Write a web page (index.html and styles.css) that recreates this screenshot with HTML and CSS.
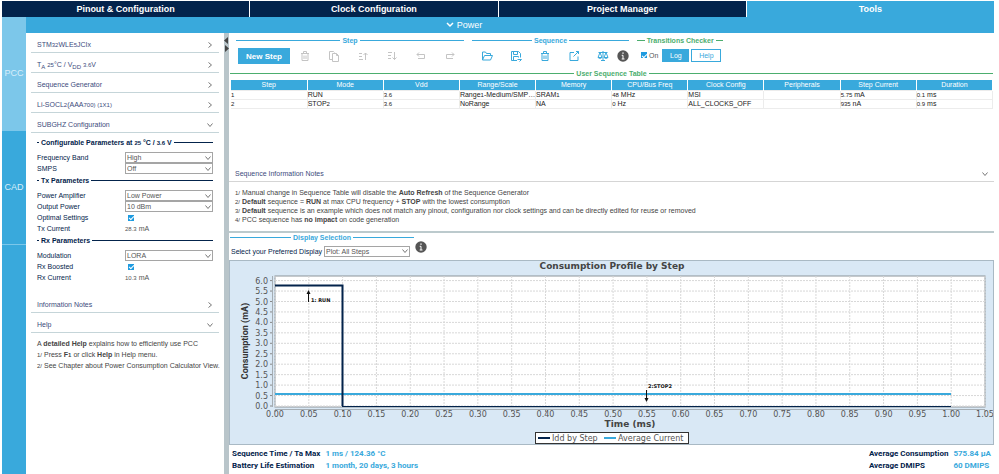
FILE: index.html
```html
<!DOCTYPE html>
<html lang="en">
<head>
  <meta charset="UTF-8">
  <title>Power Consumption Calculator</title>
  <link rel="stylesheet" href="styles.css">
</head>
<body>

  <nav class="tabs">
    <a href="#pinout">Pinout &amp; Configuration</a>
    <a href="#clock">Clock Configuration</a>
    <a href="#project">Project Manager</a>
    <a href="#tools" class="active">Tools</a>
  </nav>

  <div class="workspace">
    <nav class="rail">
      <a href="#pcc" class="active">PCC</a>
      <a href="#cad">CAD</a>
    </nav>

    <div class="content">
      <div class="power-bar">
        <button type="button"><svg width="8" height="6" viewBox="0 0 8 6"><path d="M1 1l3 3 3-3"/></svg>Power</button>
      </div>

      <div class="split">
        <aside class="side">
          <button type="button" class="fold"><span>STM<small>32</small>WLE<small>5</small>JCIx</span><svg viewBox="0 0 6 6"><path d="M1.5 0.5l3 2.5-3 2.5"/></svg></button>
          <button type="button" class="fold"><span>T<sub>A</sub> <small>25</small>°C / V<sub>DD</sub> <small>3.6</small>V</span><svg viewBox="0 0 6 6"><path d="M1.5 0.5l3 2.5-3 2.5"/></svg></button>
          <button type="button" class="fold"><span>Sequence Generator</span><svg viewBox="0 0 6 6"><path d="M1.5 0.5l3 2.5-3 2.5"/></svg></button>
          <button type="button" class="fold"><span>Li-SOCL<small>2</small>(AAA<small>700) (1X1)</small></span><svg viewBox="0 0 6 6"><path d="M1.5 0.5l3 2.5-3 2.5"/></svg></button>
          <button type="button" class="fold"><span>SUBGHZ Configuration</span><svg viewBox="0 0 6 6"><path d="M0.5 1.5l2.5 3 2.5-3"/></svg></button>

          <form class="params">
            <div class="rule navy left"><span>Configurable Parameters at <small>25</small> °C / <small>3.6</small> V</span></div>
            <div class="rows">
              <label for="band">Frequency Band</label>
              <div class="select"><select id="band"><option>High</option></select><svg viewBox="0 0 6 6"><path d="M0.5 1.5l2.5 3 2.5-3"/></svg></div>
              <label for="smps">SMPS</label>
              <div class="select"><select id="smps"><option>Off</option></select><svg viewBox="0 0 6 6"><path d="M0.5 1.5l2.5 3 2.5-3"/></svg></div>
            </div>
            <div class="rule navy left">Tx Parameters</div>
            <div class="rows">
              <label for="amp">Power Amplifier</label>
              <div class="select"><select id="amp"><option>Low Power</option></select><svg viewBox="0 0 6 6"><path d="M0.5 1.5l2.5 3 2.5-3"/></svg></div>
              <label for="output">Output Power</label>
              <div class="select"><select id="output"><option>10 dBm</option></select><svg viewBox="0 0 6 6"><path d="M0.5 1.5l2.5 3 2.5-3"/></svg></div>
              <label for="optimal">Optimal Settings</label>
              <input type="checkbox" id="optimal" checked>
              <span>Tx Current</span>
              <span class="value"><small>28.3</small> mA</span>
            </div>
            <div class="rule navy left">Rx Parameters</div>
            <div class="rows">
              <label for="modulation">Modulation</label>
              <div class="select"><select id="modulation"><option>LORA</option></select><svg viewBox="0 0 6 6"><path d="M0.5 1.5l2.5 3 2.5-3"/></svg></div>
              <label for="boosted">Rx Boosted</label>
              <input type="checkbox" id="boosted" checked>
              <span>Rx Current</span>
              <span class="value"><small>10.3</small> mA</span>
            </div>
          </form>

          <button type="button" class="fold"><span>Information Notes</span><svg viewBox="0 0 6 6"><path d="M1.5 0.5l3 2.5-3 2.5"/></svg></button>
          <button type="button" class="fold"><span>Help</span><svg viewBox="0 0 6 6"><path d="M0.5 1.5l2.5 3 2.5-3"/></svg></button>
          <div class="help">
            <p>A <b>detailed Help</b> explains how to efficiently use PCC</p>
            <p><small>1/</small> Press <b>F<small>1</small></b> or click <b>Help</b> in Help menu.</p>
            <p><small>2/</small> See Chapter about Power Consumption Calculator View.</p>
          </div>
        </aside>

        <div class="splitter">
          <svg width="5" height="20" viewBox="0 0 5 20"><path d="M4 2v7L0 5.500zM1 10v7l4-3.500z"/></svg>
        </div>

        <main class="main">
          <div class="toolbar">
            <section class="group">
              <h2 class="rule blue">Step</h2>
              <div class="tools">
                <button type="button" class="new-step">New Step</button>
                <button type="button" class="icon" aria-label="Delete step" disabled><svg viewBox="0 0 12 12"><path d="M2 3.500h8M4.500 3.500v-2h3v2M3 3.500v7h6v-7M5 5.500v3.500M7 5.500v3.500"/></svg></button>
                <button type="button" class="icon" aria-label="Duplicate step" disabled><svg viewBox="0 0 12 12"><path d="M4.500 9.500h-3v-8h4l1 1M4.500 3.500h4l2 2v6h-6zM8.500 3.500v2h2"/></svg></button>
                <button type="button" class="icon" aria-label="Move step up" disabled><svg viewBox="0 0 12 12"><path d="M2 3.500h3M2 6.500h3M2 9.500h4M8.500 10V3M6.500 5l2-2 2 2"/></svg></button>
                <button type="button" class="icon" aria-label="Move step down" disabled><svg viewBox="0 0 12 12"><path d="M2 2.500h4M2 5.500h3M2 8.500h3M8.500 2v7.500M6.500 7.500l2 2 2-2"/></svg></button>
                <button type="button" class="icon" aria-label="Undo" disabled><svg viewBox="0 0 12 12"><path d="M4 2.500l-2 2 2 2M2 4.500h7.500v4H3"/></svg></button>
                <button type="button" class="icon" aria-label="Redo" disabled><svg viewBox="0 0 12 12"><path d="M8 2.500l2 2-2 2M10 4.500H2.500v4H9"/></svg></button>
              </div>
            </section>

            <section class="group">
              <h2 class="rule blue">Sequence</h2>
              <div class="tools">
                <button type="button" class="icon" aria-label="Open"><svg viewBox="0 0 12 12"><path d="M1.500 10V2h3l1 1.500h4V5M1.500 10l2-4.500h8L9.500 10z"/></svg></button>
                <button type="button" class="icon" aria-label="Save"><svg viewBox="0 0 12 12"><path d="M1.500 1.500h7l2 2v4M1.500 1.500v9H7M3.500 1.500v3h4v-3M3.500 10.500v-4h5v1M7.500 9.500h4M9.500 11.500l2-2"/></svg></button>
                <button type="button" class="icon" aria-label="Delete sequence"><svg viewBox="0 0 12 12"><path d="M2 3.500h8M4.500 3.500v-2h3v2M3 3.500v7h6v-7M5 5.500v3.500M7 5.500v3.500"/></svg></button>
                <button type="button" class="icon" aria-label="Export"><svg viewBox="0 0 12 12"><path d="M6 2.500H2v8h8V6.500M5.500 6.500l5-5M8 1.500h2.500V4"/></svg></button>
                <button type="button" class="icon" aria-label="Compare"><svg viewBox="0 0 12 12"><path d="M1.500 2.500h9M6 1v9.500M4 10.500h4M3 2.500l-2 5h4zM9 2.500l-2 5h4zM1 7.500q2 2 4 0M7 7.500q2 2 4 0"/></svg></button>
                <svg class="info" viewBox="0 0 12 12"><circle cx="6" cy="6" r="5.700"/><path d="M6 2.300v1.700M4.700 5.300H6v3.700M4.700 9h2.800"/></svg>
              </div>
            </section>

            <section class="group checker">
              <h2 class="rule green">Transitions Checker</h2>
              <div class="tools">
                <input type="checkbox" id="checker" checked>
                <label for="checker">On</label>
                <button type="button" class="log">Log</button>
                <button type="button" class="outline">Help</button>
              </div>
            </section>
          </div>

          <h2 class="rule green table-title">User Sequence Table</h2>
          <table>
            <thead>
              <tr><th>Step</th><th>Mode</th><th>Vdd</th><th>Range/Scale</th><th>Memory</th><th>CPU/Bus Freq</th><th>Clock Config</th><th>Peripherals</th><th>Step Current</th><th>Duration</th></tr>
            </thead>
            <tbody>
              <tr><td><small>1</small></td><td>RUN</td><td><small>3.6</small></td><td>Range<small>1</small>-Medium/SMP…</td><td>SRAM<small>1</small></td><td><small>48</small> MHz</td><td>MSI</td><td></td><td><small>5.75</small> mA</td><td><small>0.1</small> ms</td></tr>
              <tr><td><small>2</small></td><td>STOP<small>2</small></td><td><small>3.6</small></td><td>NoRange</td><td>NA</td><td><small>0</small> Hz</td><td>ALL_CLOCKS_OFF</td><td></td><td><small>935</small> nA</td><td><small>0.9</small> ms</td></tr>
            </tbody>
          </table>

          <button type="button" class="fold notes-fold"><span>Sequence Information Notes</span><svg viewBox="0 0 6 6"><path d="M0.5 1.5l2.5 3 2.5-3"/></svg></button>
          <div class="notes">
            <p><small>1/</small> Manual change in Sequence Table will disable the <b>Auto Refresh</b> of the Sequence Generator</p>
            <p><small>2/</small> <b>Default</b> sequence = <b>RUN</b> at max CPU frequency + <b>STOP</b> with the lowest consumption</p>
            <p><small>3/</small> <b>Default</b> sequence is an example which does not match any pinout, configuration nor clock settings and can be directly edited for reuse or removed</p>
            <p><small>4/</small> PCC sequence has <b>no impact</b> on code generation</p>
          </div>

          <div class="display">
            <section>
              <h2 class="rule blue">Display Selection</h2>
              <div class="display-row">
                <label for="plot">Select your Preferred Display</label>
                <div class="select"><select id="plot"><option>Plot: All Steps</option></select><svg viewBox="0 0 6 6"><path d="M0.5 1.5l2.5 3 2.5-3"/></svg></div>
              </div>
            </section>
            <svg class="info" viewBox="0 0 12 12"><circle cx="6" cy="6" r="5.700"/><path d="M6 2.300v1.700M4.700 5.300H6v3.700M4.700 9h2.800"/></svg>
          </div>

          <div class="chart">
            <svg viewBox="0 0 763 183">
              <text class="chart-title" x="382" y="8">Consumption Profile by Step</text>
              <rect class="plot" x="45" y="15" width="710" height="131"/>
              <g id="grid"></g>
              <path class="axis" d="M42.500 15v131M45 148.500h710"/>
              <path class="average" d="M45 133h676"/>
              <path class="idd" d="M45 24.500h67.500V145"/>
              <path class="idd thin" d="M112 145.500h609"/>
              <path class="arrow" d="M78.500 41v-9M416.500 129v9"/>
              <path class="head" d="M76.500 33l2-4 2 4zM414.500 137l2 4 2-4z"/>
              <text class="note" x="81" y="41">1: RUN</text>
              <text class="note" x="418" y="127">2:STOP2</text>
              <text class="axis-title" x="400" y="166">Time (ms)</text>
              <text class="side-title" transform="translate(18 80) rotate(-90)">Consumption (mA)</text>
              <rect class="legend" x="305.500" y="171.500" width="153" height="11"/>
              <path class="idd" d="M308 177h12"/>
              <text x="322" y="180">Idd by Step</text>
              <path class="average" d="M374 177h12"/>
              <text x="388" y="180">Average Current</text>
            </svg>
          </div>

          <footer class="summary">
            <dl>
              <dt>Sequence Time / Ta Max</dt><dd>1 ms / 124.36 °C</dd>
              <dt>Battery Life Estimation</dt><dd>1 month, 20 days, 3 hours</dd>
            </dl>
            <dl>
              <dt>Average Consumption</dt><dd>575.84 µA</dd>
              <dt>Average DMIPS</dt><dd>60 DMIPS</dd>
            </dl>
          </footer>
        </main>
      </div>
    </div>
  </div>

  <script>
    const grid = document.getElementById("grid");
    let out = "";
    for (let i = 0; i <= 21; i++) {
      const x = 45 + i * 710 / 21;
      out += `<path class="line" d="M${x} 15v131"/><path class="tick" d="M${x} 149v2"/>`;
      out += `<text class="x" x="${x}" y="156">${(i * 0.05).toFixed(2)}</text>`;
    }
    for (let i = 0; i <= 12; i++) {
      const y = 145 - i * 10.45;
      out += `<path class="line" d="M45 ${y}h710"/><path class="tick" d="M40 ${y}h2"/>`;
      out += `<text class="y" x="38" y="${y + 3}">${(i * 0.5).toFixed(1)}</text>`;
    }
    grid.innerHTML = out;
  </script>

</body>
</html>
```
FILE: styles.css
```css
* {
  box-sizing: border-box;
}

body {
  margin: 0;
  padding: 1px 5px 0 2px;
  min-height: 100vh;
  display: flex;
  flex-direction: column;
  background-color: #fff;
  color: #03234b;
  font-family: "Liberation Sans", Arial, sans-serif;
  font-size: 7px;
  line-height: 9px;
}

button, select, input {
  margin: 0;
  font-family: inherit;
  font-size: 7px;
  line-height: 9px;
}

button {
  border: none;
  padding: 0;
  background: none;
  color: inherit;
  cursor: pointer;
}

a {
  color: white;
  text-decoration: none;
}

p, h2, dl, dd {
  margin: 0;
}

svg {
  fill: none;
  stroke: currentColor;
  flex: none;
}

small {
  font-size: 6px;
}

sub {
  font-size: 6px;
  line-height: 0;
}

.tabs {
  display: grid;
  grid-template-columns: repeat(4, 1fr);
  gap: 1px;
}

.tabs a {
  height: 16px;
  background-color: #03234b;
  font-size: 9px;
  line-height: 17px;
  font-weight: bold;
  text-align: center;
}

.tabs .active {
  background-color: #39a9dc;
}

.workspace {
  flex: 1;
  display: flex;
}

.rail {
  width: 24px;
  display: flex;
  flex-direction: column;
  background-color: #39a9dc;
}

.rail a {
  height: 114px;
  display: flex;
  align-items: center;
  justify-content: center;
  border-bottom: 1px solid #7cc7ea;
  font-size: 9px;
  color: #d8eefa;
}

.rail .active {
  background-color: #7cc7ea;
}

.content {
  flex: 1;
  min-width: 0;
  display: flex;
  flex-direction: column;
}

.power-bar {
  height: 16px;
  padding-right: 92px;
  display: flex;
  justify-content: center;
  background-color: #39a9dc;
  color: white;
}

.power-bar button {
  display: flex;
  align-items: center;
  gap: 3px;
  font-size: 9px;
}

.power-bar svg {
  stroke-width: 1.5;
}

.split {
  flex: 1;
  display: flex;
}

.side {
  width: 198px;
  padding: 0 5px;
}

.fold {
  width: 100%;
  height: 20px;
  padding: 4px 6px 0;
  display: flex;
  align-items: center;
  justify-content: space-between;
  border-bottom: 1px solid #c5d5d9;
  color: #3c4b7c;
  text-align: left;
}

.fold svg {
  width: 6px;
  height: 6px;
  color: #777;
}

.rule {
  display: flex;
  align-items: center;
  gap: 2px;
  height: 9px;
  font-size: 7px;
  line-height: 9px;
  font-weight: bold;
  white-space: nowrap;
}

.rule::before, .rule::after {
  content: "";
  flex: 1;
  height: 1px;
  background-color: currentColor;
}

.rule.left::before {
  flex: 0 0 2px;
}

.navy {
  color: #03234b;
}

.blue {
  color: #39a9dc;
}

.green {
  color: #4cae6e;
}

.params {
  padding: 5px 6px 7px;
}

.rows {
  padding: 5px 0 2px;
  display: grid;
  grid-template-columns: 1fr 88px;
  grid-auto-rows: 11px;
  align-items: center;
}

.rows:last-child {
  padding-bottom: 3px;
}

.select {
  display: grid;
  align-items: center;
}

.select select, .select svg {
  grid-area: 1 / 1;
}

.select select {
  width: 100%;
  height: 11px;
  padding: 0 1px;
  border: 1px solid #a5a5a5;
  border-radius: 0;
  appearance: none;
  background-color: white;
  color: #555;
}

.select svg {
  width: 6px;
  height: 6px;
  margin-right: 2px;
  justify-self: end;
  color: #777;
  pointer-events: none;
}

input[type="checkbox"] {
  appearance: none;
  width: 6px;
  height: 6px;
  background-color: #1e9be0;
  display: grid;
  place-items: center;
}

input[type="checkbox"]:checked::before {
  content: "";
  width: 4px;
  height: 2px;
  border-left: 1px solid white;
  border-bottom: 1px solid white;
  transform: rotate(-45deg);
}

.rows input[type="checkbox"] {
  margin-left: 3px;
}

.value {
  color: #555;
}

.help {
  padding: 5px 0 0 6px;
  color: #444;
  line-height: 11px;
  white-space: nowrap;
}

.help p {
  height: 11px;
}

.splitter {
  width: 5px;
  padding-top: 2px;
  background-color: #b9c5ca;
}

.splitter svg {
  display: block;
  fill: #444;
  stroke: none;
}

.main {
  flex: 1;
  min-width: 0;
  display: flex;
  flex-direction: column;
}

.toolbar {
  padding: 3px 7px 0;
  display: flex;
  gap: 8px;
}

.tools {
  height: 22px;
  display: flex;
  align-items: center;
}

.icon {
  width: 29px;
  height: 16px;
  display: grid;
  place-items: center;
  color: #39a9dc;
}

.icon:disabled {
  color: #c4c4c4;
}

.icon svg {
  width: 12px;
  height: 12px;
}

.new-step {
  width: 52px;
  height: 16px;
  margin-left: 2px;
  background-color: #39a9dc;
  color: white;
  font-size: 8px;
  font-weight: bold;
}

.info {
  width: 12px;
  height: 12px;
}

.info circle {
  fill: #555;
  stroke: none;
}

.info path {
  stroke: white;
}

.checker .tools {
  padding: 0 2px 2px 4px;
  gap: 2px;
}

.checker label {
  margin-right: 2px;
  color: #555;
}

.log, .outline {
  height: 13px;
  border: 1px solid #39a9dc;
}

.log {
  width: 27px;
  background-color: #39a9dc;
  color: white;
}

.outline {
  width: 30px;
  color: #39a9dc;
}

.table-title {
  margin: 2px 1px;
}

table {
  width: calc(100% - 3px);
  margin: 0 1px 0 2px;
  table-layout: fixed;
  border-collapse: collapse;
  color: #222;
}

th {
  height: 10px;
  padding: 0;
  border-right: 1px solid white;
  background-color: #39a9dc;
  color: white;
  font-weight: normal;
}

td {
  height: 9px;
  padding: 0;
  border: 1px solid #ececec;
  border-left: none;
  line-height: 8px;
  white-space: nowrap;
}

.notes-fold {
  margin-top: auto;
  border-color: #d5d5d5;
}

.notes {
  padding: 6px 6px 7px;
  border-bottom: 2px solid #bccacd;
  color: #444;
}

.notes p {
  height: 9px;
}

.display {
  padding: 0 1px;
  display: flex;
  align-items: center;
  gap: 1px;
}

.display section {
  width: 184px;
}

.display-row {
  height: 18px;
  padding: 0 4px 0 1px;
  display: grid;
  grid-template-columns: 1fr 86px;
  align-items: center;
  white-space: nowrap;
}

.chart {
  border: 1px solid #a9b9c4;
  background-color: #d9e8f5;
}

.chart svg {
  display: block;
  width: 100%;
  font-family: "DejaVu Sans", Verdana, sans-serif;
}

.chart text {
  fill: #555;
  stroke: none;
  font-size: 8px;
}

.chart .chart-title, .chart .axis-title {
  font-size: 9px;
  font-weight: bold;
  text-anchor: middle;
  fill: #444;
}

.chart .side-title {
  font-family: Roboto, "Liberation Sans", sans-serif;
  font-size: 9px;
  font-weight: bold;
  text-anchor: middle;
  fill: #333;
}

.chart .x {
  text-anchor: middle;
}

.chart .y {
  text-anchor: end;
}

.chart .note {
  font-size: 5px;
  font-weight: bold;
  fill: #111;
}

.plot {
  fill: white;
  stroke: #8c9399;
}

.line {
  stroke: #d8d8d8;
  stroke-dasharray: 2 1;
}

.tick {
  stroke: #888;
}

.axis {
  stroke: #a5adb3;
}

.idd {
  stroke: #03234b;
  stroke-width: 2;
}

.idd.thin {
  stroke-width: 1;
}

.average {
  stroke: #39a9dc;
  stroke-width: 2;
}

.arrow {
  stroke: #111;
}

.head {
  fill: #111;
  stroke: none;
}

.legend {
  fill: white;
  stroke: #333;
}

.summary {
  padding: 3px 3px 2px;
  display: flex;
  justify-content: space-between;
  font-family: Roboto, "Liberation Sans", sans-serif;
  font-size: 8px;
  line-height: 12px;
  font-weight: bold;
}

.summary dl {
  display: grid;
  grid-template-columns: auto auto;
  column-gap: 5px;
}

.summary dd {
  color: #39a9dc;
}
```
